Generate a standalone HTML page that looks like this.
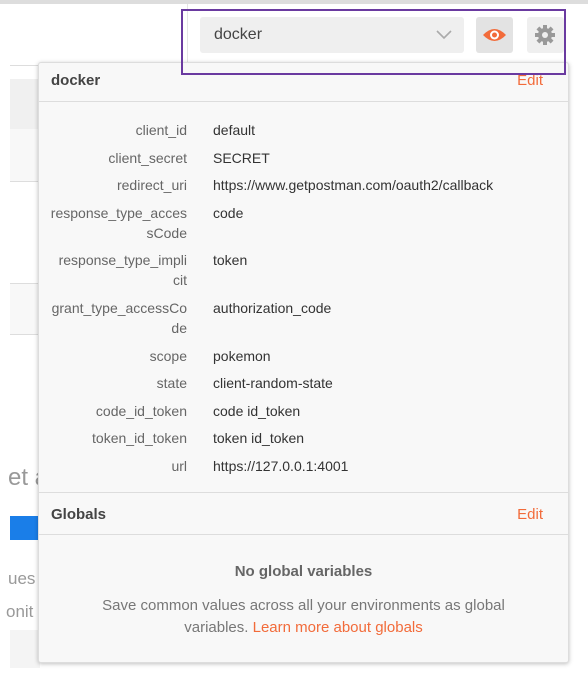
<!DOCTYPE html>
<html><head><meta charset="utf-8"><style>
*{box-sizing:border-box;margin:0;padding:0}
body{width:588px;height:686px;background:#fff;font-family:"Liberation Sans",sans-serif;position:relative;overflow:hidden;color:#333}
.abs{position:absolute}
.pop{left:38px;top:62px;width:531px;height:601px;background:#f8f8f8;border:1px solid #ddd;border-radius:3px;box-shadow:0 1px 4px rgba(0,0,0,.25)}
.row{position:absolute;left:0;width:100%;font-size:14px;line-height:20px}
.k{position:absolute;right:381px;text-align:right;color:#666;width:150px}
.v{position:absolute;left:174px;color:#333}
.edit{color:#f26b3a}
</style></head><body>
<div class="abs" style="left:0;top:0;width:588px;height:4px;background:#ddd"></div>
<div class="abs" style="left:10px;top:4px;width:564px;height:664px;background:#fff"></div>
<div class="abs" style="left:10px;top:65px;width:30px;height:1px;background:#ddd"></div>
<div class="abs" style="left:10px;top:79px;width:30px;height:50px;background:#f0f0f0"></div>
<div class="abs" style="left:10px;top:129px;width:30px;height:53px;background:#f8f8f8;border-bottom:1px solid #ddd"></div>
<div class="abs" style="left:10px;top:283px;width:30px;height:52px;background:#f8f8f8;border-top:1px solid #ddd;border-bottom:1px solid #ddd"></div>
<div class="abs" style="left:8px;top:464px;font-size:24px;color:#999">et a</div>
<div class="abs" style="left:10px;top:516px;width:30px;height:24px;background:#1a7ee8"></div>
<div class="abs" style="left:8px;top:569px;font-size:17px;color:#999">ues</div>
<div class="abs" style="left:10px;top:630px;width:30px;height:38px;background:#f4f4f4"></div>
<div class="abs" style="left:6px;top:602px;font-size:17px;color:#999">onit</div>
<div class="abs" style="left:187px;top:4px;width:1px;height:62px;background:#e5e5e5"></div>

<div class="abs" style="left:200px;top:17px;width:264px;height:36px;background:#efefef;border-radius:3px">
<span class="abs" style="left:14px;top:9px;font-size:16px;color:#444">docker</span>
<svg class="abs" style="left:236px;top:13px" width="16" height="10"><path d="M1 1l7 7 7-7" fill="none" stroke="#aaa" stroke-width="1.6"/></svg>
</div>
<div class="abs" style="left:476px;top:17px;width:37px;height:36px;background:#e3e3e3;border-radius:3px">
<svg class="abs" style="left:6px;top:9px" width="25" height="18" viewBox="0 0 25 18"><path d="M1 9Q12.5-3 24 9Q12.5 21 1 9Z" fill="#f26b3a"/><circle cx="12.5" cy="9" r="4.5" fill="#fff"/><circle cx="12.5" cy="9" r="2.5" fill="#f26b3a"/></svg>
</div>
<div class="abs" style="left:527px;top:17px;width:37px;height:36px;background:#efefef;border-radius:3px">
<svg class="abs" style="left:7px;top:7px" width="22" height="22" viewBox="0 0 22 22"><g fill="#999"><circle cx="11" cy="11" r="7"/><rect x="9" y="1" width="4" height="20"/><rect x="1" y="9" width="20" height="4"/><rect x="9" y="1" width="4" height="20" transform="rotate(45 11 11)"/><rect x="9" y="1" width="4" height="20" transform="rotate(-45 11 11)"/></g><circle cx="11" cy="11" r="3" fill="#efefef"/></svg>
</div>
<div class="abs" style="left:181px;top:9px;width:385px;height:66px;border:2px solid #6a3aa0;z-index:5"></div>

<div class="abs pop">
<div class="row" style="top:8px;height:31px;border-bottom:1px solid #ddd"><span class="abs" style="left:12px;top:0;font-size:15px;font-weight:bold;color:#444">docker</span><span class="abs edit" style="right:25px;top:0;font-size:15px">Edit</span></div>
<div class="row" style="top:57px"><span class="k">client_id</span><span class="v">default</span></div>
<div class="row" style="top:85px"><span class="k">client_secret</span><span class="v">SECRET</span></div>
<div class="row" style="top:112px"><span class="k">redirect_uri</span><span class="v">https://www.getpostman.com/oauth2/callback</span></div>
<div class="row" style="top:140px"><span class="k">response_type_acces<br>sCode</span><span class="v">code</span></div>
<div class="row" style="top:187px"><span class="k">response_type_impli<br>cit</span><span class="v">token</span></div>
<div class="row" style="top:235px"><span class="k">grant_type_accessCo<br>de</span><span class="v">authorization_code</span></div>
<div class="row" style="top:283px"><span class="k">scope</span><span class="v">pokemon</span></div>
<div class="row" style="top:310px"><span class="k">state</span><span class="v">client-random-state</span></div>
<div class="row" style="top:338px"><span class="k">code_id_token</span><span class="v">code id_token</span></div>
<div class="row" style="top:365px"><span class="k">token_id_token</span><span class="v">token id_token</span></div>
<div class="row" style="top:393px"><span class="k">url</span><span class="v">https://127.0.0.1:4001</span></div>
<div class="row" style="top:429px;height:43px;border-top:1px solid #ddd;border-bottom:1px solid #ddd"><span class="abs" style="left:12px;top:12px;font-size:15px;font-weight:bold;color:#444">Globals</span><span class="abs edit" style="right:25px;top:12px;font-size:15px">Edit</span></div>
<div class="row" style="top:499px;text-align:center;font-size:15px;font-weight:bold;color:#666">No global variables</div>
<div class="row" style="top:532px;text-align:center;font-size:15px;color:#777;line-height:22px">Save common values across all your environments as global<br>variables. <span class="edit">Learn more about globals</span></div>
</div>
</body></html>
